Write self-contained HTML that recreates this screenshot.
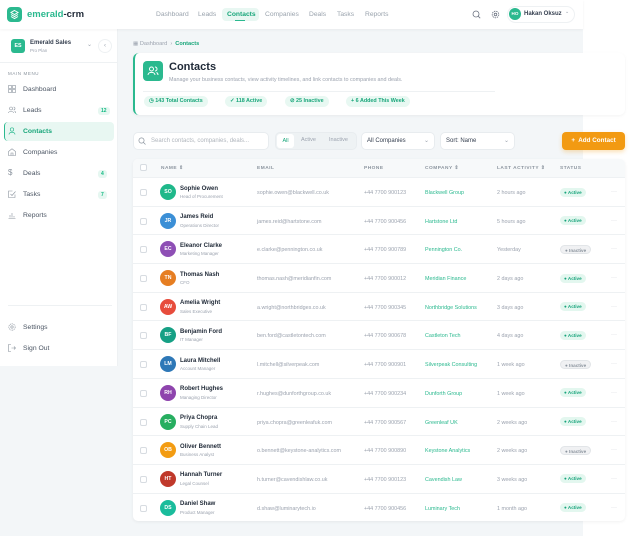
<!DOCTYPE html>
<html><head><meta charset="utf-8"><style>
*{box-sizing:border-box;margin:0;padding:0}
body{width:640px;height:536px;overflow:hidden;background:#fff;font-family:"Liberation Sans",sans-serif;color:#1f2937;position:relative}
.abs{position:absolute}
.top{left:0;top:0;width:583px;height:29px;background:#fff;box-shadow:0 1px 3px rgba(0,0,0,.05);z-index:3}
.main{left:118px;top:29px;width:465px;height:507px;background:#f3f6f8}
.side{left:0;top:29px;width:118px;height:337px;background:#fff;border-right:1px solid #eef1f3}
.sidebg{left:0;top:366px;width:118px;height:170px;background:#f3f6f8}
.nav{font-size:6.7px;color:#9aa3ad;top:11px}
.mi{position:absolute;left:23px;font-size:6.8px;color:#4b5563}
.ic{position:absolute;left:8px;width:8px;height:8px}
.badge{position:absolute;left:98px;font-size:5px;color:#10b981;background:#e6f7f1;border-radius:3px;padding:1px 3px;font-weight:bold}
.card{left:133px;top:53px;width:492px;height:62px;background:#fff;border-radius:6px;border-left:2px solid #2bb98f;box-shadow:0 1px 3px rgba(0,0,0,.05)}
.pill{position:absolute;top:96px;height:11px;border-radius:6px;background:#e8f8f2;color:#18a67a;font-size:5.4px;font-weight:bold;line-height:11px;padding:0 5px}
.tbl{left:133px;top:159px;width:492px;height:362px;background:#fff;border-radius:5px;box-shadow:0 1px 3px rgba(0,0,0,.06);overflow:hidden}
.th{height:18px;background:#f7f9fa;font-size:4.8px;letter-spacing:.5px;color:#8b949e;font-weight:bold;position:relative}
.th span{position:absolute;top:6.5px}
.row{height:28.7px;border-top:1px solid #eef1f3;position:relative;font-size:5.4px;color:#9ca3af}
.row>*{position:absolute}
.cb{left:7px;width:7px;height:7px;border:1px solid #d7dce1;border-radius:2px;top:11px}
.av{left:27px;top:6px;width:16px;height:16px;border-radius:50%;color:#fff;font-size:5.2px;font-weight:bold;text-align:center;line-height:16px}
.nm{left:47px;top:7.5px;font-size:6px;font-weight:bold;color:#1f2937}
.rl{left:47px;top:16px;font-size:4.5px;color:#9ca3af}
.em{left:124px;top:12px}.ph{left:231px;top:12px}.co{left:292px;top:12px;color:#2bb98f}.la{left:364px;top:12px}
.st{left:427px;top:9.5px;height:9px;line-height:9px;border-radius:5px;font-size:4.6px;font-weight:bold;padding:0 4px}
.st.a{background:#e3f7ef;color:#16a37a}.st.i{background:#f0f1f3;color:#8b949e;border:1px solid #e2e5e8}
.dots{left:478px;top:11px;color:#c5cad0;font-size:6px}
.sel{position:absolute;top:132px;height:18px;background:#fff;border:1px solid #e8ecef;border-radius:5px;font-size:6px;color:#374151;line-height:16px;padding-left:5px}
</style></head><body>
<div class="abs main"></div>
<div class="abs side"></div>
<div class="abs sidebg"></div>
<div class="abs top">
 <div class="abs" style="left:7px;top:7px;width:15px;height:15px;border-radius:4px;background:#2bb98f"><svg width="15" height="15" viewBox="0 0 15 15"><path d="M7.5 3.5l3.5 2-3.5 2-3.5-2z M4 7.5l3.5 2 3.5-2 M4 9.5l3.5 2 3.5-2" fill="none" stroke="#fff" stroke-width="1"/></svg></div>
 <div class="abs" style="left:27px;top:9px;font-size:9.5px;font-weight:bold;color:#2bb98f">emerald<span style="color:#1f2937">-crm</span></div>
 <div class="abs nav" style="left:156px">Dashboard</div>
 <div class="abs nav" style="left:198px">Leads</div>
 <div class="abs" style="left:222px;top:8px;width:37px;height:13px;border-radius:4px;background:#e8f7f2"></div>
 <div class="abs nav" style="left:227px;color:#18a67a;font-weight:bold">Contacts</div>
 <div class="abs" style="left:235px;top:20px;width:10px;height:1.3px;background:#2bb98f"></div>
 <div class="abs nav" style="left:265px">Companies</div>
 <div class="abs nav" style="left:309px">Deals</div>
 <div class="abs nav" style="left:337px">Tasks</div>
 <div class="abs nav" style="left:365px">Reports</div>
 <svg class="abs" style="left:472px;top:10px" width="9" height="9" viewBox="0 0 9 9"><circle cx="4" cy="4" r="3" fill="none" stroke="#6b7280" stroke-width=".8"/><path d="M6.2 6.2l2 2" stroke="#6b7280" stroke-width=".8"/></svg>
 <svg class="abs" style="left:491px;top:10px" width="9" height="9" viewBox="0 0 9 9"><circle cx="4.5" cy="4.5" r="3.3" fill="none" stroke="#6b7280" stroke-width=".8" stroke-dasharray="1.5 .8"/><circle cx="4.5" cy="4.5" r="1.3" fill="none" stroke="#6b7280" stroke-width=".8"/></svg>
 <div class="abs" style="left:507px;top:6px;width:68px;height:17px;border:1px solid #eef1f3;border-radius:9px"></div>
 <div class="abs" style="left:509px;top:8px;width:12px;height:12px;border-radius:50%;background:#2bb98f;color:#fff;font-size:4.6px;font-weight:bold;text-align:center;line-height:12px">HO</div>
 <div class="abs" style="left:524px;top:10.5px;font-size:6px;font-weight:bold;color:#374151">Hakan Oksuz</div>
 <div class="abs" style="left:565px;top:9px;font-size:5px;color:#9ca3af">⌄</div>
</div>
<div class="abs" style="left:11px;top:39px;width:14px;height:14px;border-radius:3px;background:#2bb98f;color:#fff;font-size:5.3px;font-weight:bold;text-align:center;line-height:14px">ES</div>
<div class="abs" style="left:30px;top:40px;font-size:6px;font-weight:bold;color:#374151">Emerald Sales</div>
<div class="abs" style="left:30px;top:48px;font-size:4.5px;color:#9ca3af">Pro Plan</div>
<div class="abs" style="left:87px;top:41px;font-size:6px;color:#9ca3af">⌄</div>
<div class="abs" style="left:98px;top:39px;width:14px;height:14px;border-radius:50%;border:1px solid #eef1f3;font-size:6px;color:#9ca3af;text-align:center;line-height:12px">‹</div>
<div class="abs" style="left:0;top:62px;width:118px;height:1px;background:#eef1f3"></div>
<div class="abs" style="left:8px;top:71px;font-size:4.5px;letter-spacing:.6px;color:#8b949e">MAIN MENU</div>
<div class="abs" style="left:4px;top:122px;width:110px;height:19px;border-radius:4px;background:#e8f7f2;border-left:1.5px solid #2bb98f"></div>
<svg class="ic" style="top:85px" viewBox="0 0 8 8"><g fill="none" stroke="#8b949e" stroke-width=".6"><rect x=".5" y=".5" width="3" height="3"/><rect x="4.5" y=".5" width="3" height="3"/><rect x=".5" y="4.5" width="3" height="3"/><rect x="4.5" y="4.5" width="3" height="3"/></g></svg>
<div class="mi" style="top:86px">Dashboard</div>
<svg class="ic" style="top:106px" viewBox="0 0 8 8"><g fill="none" stroke="#8b949e" stroke-width=".6"><circle cx="3" cy="2.5" r="1.5"/><path d="M.5 7c0-2 5-2 5 0M5.5 1a1.5 1.5 0 010 3M6.5 5c1 .3 1 1 1 2"/></g></svg>
<div class="mi" style="top:107px">Leads</div><div class="badge" style="top:107px">12</div>
<svg class="ic" style="top:127px" viewBox="0 0 8 8"><g fill="none" stroke="#2bb98f" stroke-width=".7"><circle cx="4" cy="2.5" r="1.7"/><path d="M1 7.5c0-3 6-3 6 0"/></g></svg>
<div class="mi" style="top:128px;color:#18a67a;font-weight:bold">Contacts</div>
<svg class="ic" style="top:148px" viewBox="0 0 8 8"><path d="M.5 3.5L4 .8l3.5 2.7V7.5h-7z M3 7.5V5h2v2.5" fill="none" stroke="#8b949e" stroke-width=".6"/></svg>
<div class="mi" style="top:149px">Companies</div>
<div class="ic" style="top:169px;font-size:8px;color:#8b949e;line-height:8px">$</div>
<div class="mi" style="top:170px">Deals</div><div class="badge" style="top:170px">4</div>
<svg class="ic" style="top:190px" viewBox="0 0 8 8"><path d="M7 4.5v3H.5V1h4 M2.5 4l1.5 1.5 3.5-4" fill="none" stroke="#8b949e" stroke-width=".6"/></svg>
<div class="mi" style="top:191px">Tasks</div><div class="badge" style="top:191px">7</div>
<svg class="ic" style="top:211px" viewBox="0 0 8 8"><path d="M.5 7.5h7M2 6.5V4M4 6.5V2M6 6.5V5" fill="none" stroke="#8b949e" stroke-width=".6"/></svg>
<div class="mi" style="top:212px">Reports</div>
<div class="abs" style="left:8px;top:305px;width:104px;height:1px;background:#eef1f3"></div>
<svg class="ic" style="top:323px" viewBox="0 0 8 8"><circle cx="4" cy="4" r="3.2" fill="none" stroke="#8b949e" stroke-width=".6" stroke-dasharray="1.2 .6"/><circle cx="4" cy="4" r="1.2" fill="none" stroke="#8b949e" stroke-width=".6"/></svg>
<div class="mi" style="top:324px">Settings</div>
<svg class="ic" style="top:344px" viewBox="0 0 8 8"><path d="M3 .5H.5v7H3M3.5 4h4M6 2.5L7.5 4 6 5.5" fill="none" stroke="#8b949e" stroke-width=".6"/></svg>
<div class="mi" style="top:345px">Sign Out</div>
<div class="abs" style="left:133px;top:41px;font-size:5.6px;color:#9ca3af">▦ Dashboard &nbsp;›&nbsp; <span style="color:#18a67a;font-weight:bold">Contacts</span></div>
<div class="abs card"></div>
<div class="abs" style="left:143px;top:61px;width:20px;height:20px;border-radius:4px;background:#2bb98f"><svg width="20" height="20" viewBox="0 0 20 20"><g fill="none" stroke="#fff" stroke-width="1"><circle cx="8.5" cy="8" r="2"/><path d="M5 14c0-3.5 7-3.5 7 0M12 6a2 2 0 010 4M13.5 11.5c1.2.5 1.5 1.3 1.5 2.5"/></g></svg></div>
<div class="abs" style="left:169px;top:61px;font-size:11px;font-weight:bold;color:#1f2937">Contacts</div>
<div class="abs" style="left:169px;top:77px;font-size:5.4px;color:#9ca3af">Manage your business contacts, view activity timelines, and link contacts to companies and deals.</div>
<div class="abs" style="left:143px;top:91px;width:352px;height:1px;background:#eef1f3"></div>
<div class="pill" style="left:144px">◷ 143 Total Contacts</div>
<div class="pill" style="left:225px">✓ 118 Active</div>
<div class="pill" style="left:285px">⊘ 25 Inactive</div>
<div class="pill" style="left:346px">+ 6 Added This Week</div>
<div class="sel" style="left:133px;width:136px;color:#b0b6bd;padding-left:17px">Search contacts, companies, deals...</div>
<svg class="abs" style="left:138px;top:137px" width="8" height="8" viewBox="0 0 8 8"><circle cx="3.5" cy="3.5" r="2.6" fill="none" stroke="#8b949e" stroke-width=".7"/><path d="M5.5 5.5l2 2" stroke="#8b949e" stroke-width=".7"/></svg>
<div class="sel" style="left:275px;width:82px;background:#eef2f4;padding:0"></div>
<div class="abs" style="left:277px;top:134px;width:17px;height:14px;background:#fff;border-radius:3px;font-size:5.5px;color:#18a67a;text-align:center;line-height:14px">All</div>
<div class="abs" style="left:301px;top:137px;font-size:5.5px;color:#9ca3af">Active</div>
<div class="abs" style="left:329px;top:137px;font-size:5.5px;color:#9ca3af">Inactive</div>
<div class="sel" style="left:361px;width:74px">All Companies<span style="position:absolute;right:5px;color:#9ca3af">⌄</span></div>
<div class="sel" style="left:440px;width:75px">Sort: Name<span style="position:absolute;right:5px;color:#9ca3af">⌄</span></div>
<div class="abs" style="left:562px;top:132px;width:63px;height:18px;border-radius:4px;background:#f29a12;color:#fff;font-size:6.3px;font-weight:bold;line-height:18px;text-align:center;box-shadow:0 2px 4px rgba(242,154,18,.3)">+&nbsp; Add Contact</div>
<div class="abs tbl">
<div class="th"><span style="left:7px;top:5px;width:7px;height:7px;border:1px solid #d7dce1;border-radius:2px;background:#fff"></span><span style="left:28px">NAME ⇕</span><span style="left:124px">EMAIL</span><span style="left:231px">PHONE</span><span style="left:292px">COMPANY ⇕</span><span style="left:364px">LAST ACTIVITY ⇕</span><span style="left:427px">STATUS</span></div>
<div class="row"><i class="cb"></i><b class="av" style="background:#1fb88a">SO</b><b class="nm">Sophie Owen</b><span class="rl">Head of Procurement</span><span class="em">sophie.owen@blackwell.co.uk</span><span class="ph">+44 7700 900123</span><span class="co">Blackwell Group</span><span class="la">2 hours ago</span><span class="st a">● Active</span><span class="dots">···</span></div>
<div class="row"><i class="cb"></i><b class="av" style="background:#3b8fd6">JR</b><b class="nm">James Reid</b><span class="rl">Operations Director</span><span class="em">james.reid@hartstone.com</span><span class="ph">+44 7700 900456</span><span class="co">Hartstone Ltd</span><span class="la">5 hours ago</span><span class="st a">● Active</span><span class="dots">···</span></div>
<div class="row"><i class="cb"></i><b class="av" style="background:#8e4fb5">EC</b><b class="nm">Eleanor Clarke</b><span class="rl">Marketing Manager</span><span class="em">e.clarke@pennington.co.uk</span><span class="ph">+44 7700 900789</span><span class="co">Pennington Co.</span><span class="la">Yesterday</span><span class="st i">● Inactive</span><span class="dots">···</span></div>
<div class="row"><i class="cb"></i><b class="av" style="background:#e67e22">TN</b><b class="nm">Thomas Nash</b><span class="rl">CFO</span><span class="em">thomas.nash@meridianfin.com</span><span class="ph">+44 7700 900012</span><span class="co">Meridian Finance</span><span class="la">2 days ago</span><span class="st a">● Active</span><span class="dots">···</span></div>
<div class="row"><i class="cb"></i><b class="av" style="background:#e74c3c">AW</b><b class="nm">Amelia Wright</b><span class="rl">Sales Executive</span><span class="em">a.wright@northbridges.co.uk</span><span class="ph">+44 7700 900345</span><span class="co">Northbridge Solutions</span><span class="la">3 days ago</span><span class="st a">● Active</span><span class="dots">···</span></div>
<div class="row"><i class="cb"></i><b class="av" style="background:#16a085">BF</b><b class="nm">Benjamin Ford</b><span class="rl">IT Manager</span><span class="em">ben.ford@castletontech.com</span><span class="ph">+44 7700 900678</span><span class="co">Castleton Tech</span><span class="la">4 days ago</span><span class="st a">● Active</span><span class="dots">···</span></div>
<div class="row"><i class="cb"></i><b class="av" style="background:#2e78b7">LM</b><b class="nm">Laura Mitchell</b><span class="rl">Account Manager</span><span class="em">l.mitchell@silverpeak.com</span><span class="ph">+44 7700 900901</span><span class="co">Silverpeak Consulting</span><span class="la">1 week ago</span><span class="st i">● Inactive</span><span class="dots">···</span></div>
<div class="row"><i class="cb"></i><b class="av" style="background:#8e44ad">RH</b><b class="nm">Robert Hughes</b><span class="rl">Managing Director</span><span class="em">r.hughes@dunforthgroup.co.uk</span><span class="ph">+44 7700 900234</span><span class="co">Dunforth Group</span><span class="la">1 week ago</span><span class="st a">● Active</span><span class="dots">···</span></div>
<div class="row"><i class="cb"></i><b class="av" style="background:#27ae60">PC</b><b class="nm">Priya Chopra</b><span class="rl">Supply Chain Lead</span><span class="em">priya.chopra@greenleafuk.com</span><span class="ph">+44 7700 900567</span><span class="co">Greenleaf UK</span><span class="la">2 weeks ago</span><span class="st a">● Active</span><span class="dots">···</span></div>
<div class="row"><i class="cb"></i><b class="av" style="background:#f39c12">OB</b><b class="nm">Oliver Bennett</b><span class="rl">Business Analyst</span><span class="em">o.bennett@keystone-analytics.com</span><span class="ph">+44 7700 900890</span><span class="co">Keystone Analytics</span><span class="la">2 weeks ago</span><span class="st i">● Inactive</span><span class="dots">···</span></div>
<div class="row"><i class="cb"></i><b class="av" style="background:#c0392b">HT</b><b class="nm">Hannah Turner</b><span class="rl">Legal Counsel</span><span class="em">h.turner@cavendishlaw.co.uk</span><span class="ph">+44 7700 900123</span><span class="co">Cavendish Law</span><span class="la">3 weeks ago</span><span class="st a">● Active</span><span class="dots">···</span></div>
<div class="row"><i class="cb"></i><b class="av" style="background:#1abc9c">DS</b><b class="nm">Daniel Shaw</b><span class="rl">Product Manager</span><span class="em">d.shaw@luminarytech.io</span><span class="ph">+44 7700 900456</span><span class="co">Luminary Tech</span><span class="la">1 month ago</span><span class="st a">● Active</span><span class="dots">···</span></div>
</div>
</body></html>
